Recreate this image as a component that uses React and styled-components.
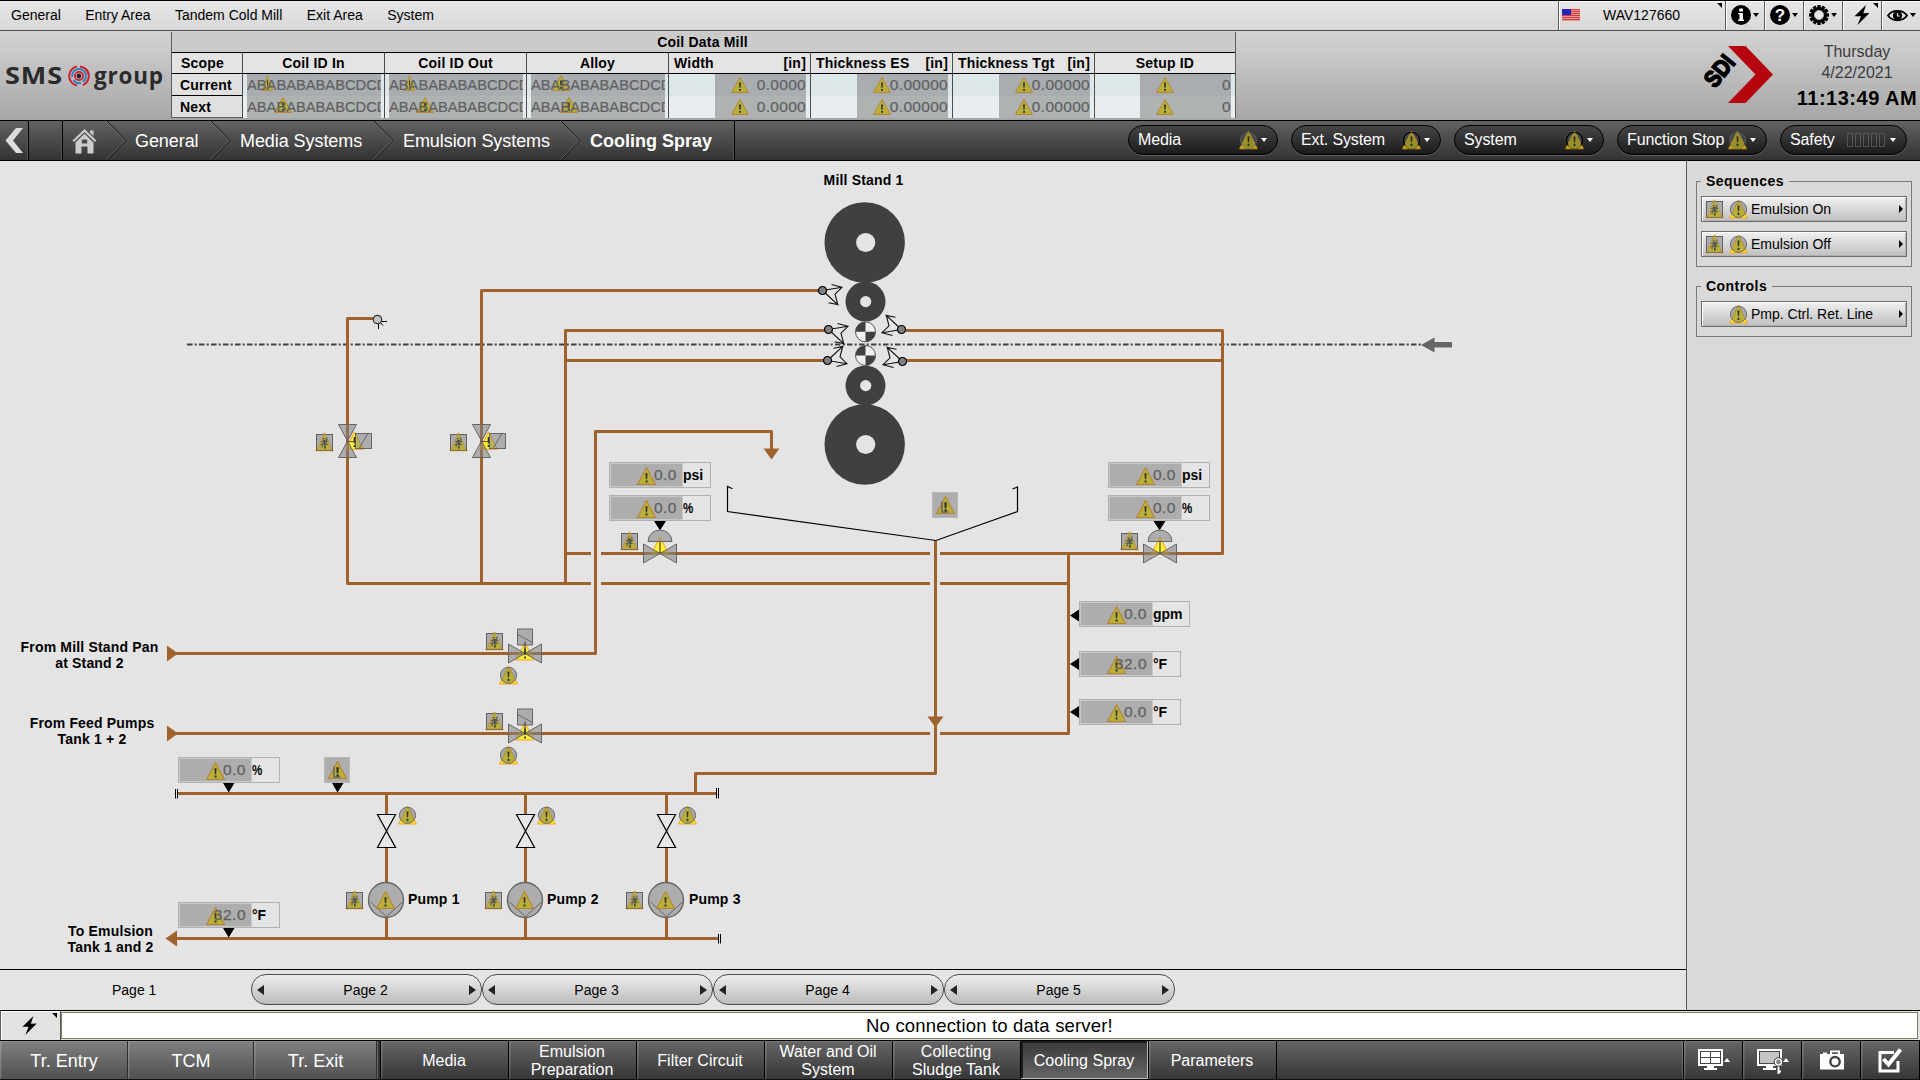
import React from 'react';
import styled, { createGlobalStyle, css } from 'styled-components';

const PIPE = '#a0622d';
const TOP = 161;

const GlobalStyle = createGlobalStyle`
  * { box-sizing: border-box; }
  html, body { margin: 0; padding: 0; overflow: hidden; background: #e4e4e4; }
  body { font-family: "Liberation Sans", Arial, Helvetica, sans-serif; font-size: 14px; color: #000; }
  svg { display: block; overflow: visible; flex: none; }
`;

const Screen = styled.div`
  width: 1920px;
  height: 1080px;
  display: flex;
  flex-direction: column;
  overflow: hidden;
  white-space: nowrap;
`;

/* ---------- menu bar ---------- */

const MenuBar = styled.div`
  flex: none;
  height: 31px;
  display: flex;
  border-top: 1px solid #000;
  border-bottom: 1px solid #4c4c4c;
  background: linear-gradient(#e6e6e6, #d8d8d8);
`;

const MenuItems = styled.div`
  flex: 1;
  display: flex;
  align-items: center;
  padding: 0 0 1px 11px;
  gap: 24.4px;
`;

const MenuButton = styled.div`
  position: relative;
  width: ${p => p.$w}px;
  display: flex;
  align-items: center;
  justify-content: ${p => (p.$start ? 'flex-start' : 'center')};
  padding: 0 0 1px ${p => (p.$start ? 3 : 0)}px;
  gap: 2px;
  border-left: 1px solid #5a5a5a;
  box-shadow: inset 1px 1px 0 #fff;
`;

const Station = styled.span`
  margin-left: 21px;
`;

const Corner = styled.i`
  position: absolute;
  right: 3px;
  top: 2px;
  border-top: 5px solid #000;
  border-left: 5px solid transparent;
`;

const Caret = styled.i`
  border-left: ${p => p.$s || 3.5}px solid transparent;
  border-right: ${p => p.$s || 3.5}px solid transparent;
  border-top: 4px solid ${p => p.$c || '#000'};
`;

/* ---------- header ---------- */

const Header = styled.div`
  flex: none;
  height: 90px;
  display: flex;
  background: linear-gradient(#d4d4d4, #a6a6a6);
  border-bottom: 1px solid #000;
`;

const Brand = styled.div`
  width: 171px;
  display: flex;
  align-items: center;
  padding: 0 0 0 5px;
  font: bold 22.5px "Open Sans", "Liberation Sans", sans-serif;
  letter-spacing: 0.8px;
  color: #2b2b2b;
`;

const BrandWide = styled.span`
  width: 58px;
  transform: scaleX(1.2);
  transform-origin: 0 50%;
`;

const CoilTable = styled.div`
  width: 1065px;
  height: 86px;
  margin-top: 1px;
  border: 1px solid #5c5c5c;
  border-top: 0;
  font-weight: bold;
  letter-spacing: 0.2px;
`;

const CoilTitle = styled.div`
  height: 20px;
  padding-right: 2px;
  line-height: 21px;
  text-align: center;
  background: #cbcbcb;
`;

const CoilRow = styled.div`
  display: grid;
  grid-template-columns: 70px repeat(6, 142px) 141px;
  height: ${p => p.$h}px;
  border-top: 1px solid #000;
  background: ${p => p.$bg};
`;

const CoilCell = styled.div`
  min-width: 0;
  display: flex;
  align-items: center;
  justify-content: ${p => p.$j || 'center'};
  padding: ${p => p.$p || '0'};
  border-left: ${p => (p.$first ? 0 : 1)}px solid #4c4c4c;
  background: ${p => p.$bg || 'transparent'};
`;

const CoilField = styled.div`
  position: relative;
  width: ${p => (p.$wide ? 134 : 91)}px;
  align-self: stretch;
  overflow: hidden;
  background: ${p => (p.$alt ? '#aeb2b2' : '#a9adb0')};
  color: #606060;
  font-weight: normal;
  font-size: ${p => (p.$wide ? 14.7 : 15.5)}px;
  letter-spacing: ${p => (p.$wide ? 0 : 0.3)}px;
  -webkit-text-stroke: 0.2px #606060;
  line-height: 22px;
  text-align: ${p => (p.$wide ? 'left' : 'right')};
`;

const FieldAlert = styled.span`
  position: absolute;
  left: ${p => p.$x}px;
  top: ${p => p.$y}px;
`;

const OverAlert = styled.span`
  position: relative;
`;

const Spacer = styled.div`
  flex: 1;
`;

const CompanyLogo = styled.div`
  padding: 14px 21px 0 0;
`;

const Clock = styled.div`
  width: 126px;
  padding-top: 11px;
  text-align: center;
  font-size: 16px;
  line-height: 20.5px;
  color: #3c3c3c;
`;

const Time = styled.div`
  margin-top: 3px;
  font-size: 20px;
  line-height: 24px;
  font-weight: bold;
  letter-spacing: 0.5px;
  color: #000;
`;

/* ---------- breadcrumb ---------- */

const NavBar = styled.div`
  flex: none;
  height: 40px;
  display: flex;
  background: linear-gradient(#626262, #333);
  border-bottom: 1px solid #000;
  color: #fff;
`;

const NavCell = styled.div`
  width: ${p => p.$w}px;
  display: flex;
  align-items: center;
  justify-content: ${p => p.$j || 'center'};
  padding-left: ${p => p.$pl || 0}px;
  border-right: 1px solid #000;
  box-shadow: inset -1px 0 0 #555;
`;

const Crumb = styled.div`
  width: ${p => p.$w}px;
  display: flex;
  align-items: center;
  justify-content: space-between;
  padding: 1px 0 0 ${p => p.$pl}px;
  font-size: 18px;
  letter-spacing: -0.07px;
`;

const CurrentCrumb = styled.b`
  padding-top: 1px;
  font-size: 18px;
`;

const Pills = styled.div`
  display: flex;
  align-items: center;
  gap: 13px;
  padding-right: 13px;
`;

const Pill = styled.div`
  width: ${p => p.$w}px;
  height: 30px;
  margin-top: -1px;
  display: flex;
  align-items: center;
  justify-content: space-between;
  padding: 0 10px 0 9px;
  border: 1px solid #000;
  border-radius: 15px;
  background: linear-gradient(#454545, #1b1b1b);
  box-shadow: 0 1px 0 #5c5c5c;
  font-size: 16px;
  letter-spacing: -0.12px;
`;

const PillState = styled.span`
  display: flex;
  align-items: center;
  gap: ${p => (p.$bars ? 2 : 3)}px;
`;

const SafetyBar = styled.i`
  width: 6px;
  height: 14px;
  border: 1px solid #555;
`;

/* ---------- work area ---------- */

const Body = styled.div`
  flex: none;
  height: 849px;
  display: flex;
`;

const Work = styled.div`
  width: 1687px;
  display: flex;
  flex-direction: column;
  background: #e4e4e4;
  border-right: 1px solid #5c5c5c;
`;

const Canvas = styled.div`
  position: relative;
  flex: none;
  height: 808px;
`;

const Placed = styled.div`
  position: absolute;
  left: ${p => p.$x}px;
  top: ${p => p.$y - TOP}px;
`;

const Label = styled(Placed)`
  font-weight: bold;
  line-height: 16px;
  letter-spacing: 0.17px;
  text-align: center;
  ${p => p.$mid && css`transform: translateX(-50%);`}
`;

const Value = styled.div`
  width: ${p => p.$w || 102}px;
  height: 26px;
  display: flex;
  border: 1px solid #b2b2b2;
`;

const ValueField = styled.div`
  position: relative;
  width: 73px;
  padding-right: 5px;
  border: 1px solid #c8c8c8;
  background: #adadad;
  color: #606060;
  font-size: 15.5px;
  letter-spacing: 0.5px;
  -webkit-text-stroke: 0.25px #606060;
  line-height: 22px;
  text-align: right;
`;

const Unit = styled.b`
  line-height: 24px;
  transform: scaleX(${p => (p.$narrow ? 0.82 : 1)});
  transform-origin: 0 50%;
`;

const LevelBox = styled.div`
  width: 26px;
  height: 26px;
  display: flex;
  align-items: center;
  justify-content: center;
  border: 1px solid #b8b8b8;
  background: #adadad;
`;

const Pages = styled.div`
  flex: 1;
  display: flex;
  padding-top: 4px;
  border-top: 1px solid #000;
`;

const PageCurrent = styled.div`
  width: 251px;
  padding-left: 112px;
  line-height: 33px;
`;

const PageButton = styled.div`
  width: 231px;
  height: 31px;
  display: flex;
  align-items: center;
  justify-content: space-between;
  padding: 0 5px;
  border: 1px solid #4c4c4c;
  border-radius: 15px;
  background: linear-gradient(#ededed, #bcbcbc);
`;

const PageName = styled.span`
  margin-left: -2px;
`;

const Side = styled.i`
  border-top: ${p => p.$h}px solid transparent;
  border-bottom: ${p => p.$h}px solid transparent;
  border-${p => (p.$left ? 'right' : 'left')}: ${p => p.$w}px solid ${p => p.$c || '#222'};
`;

const SidePanel = styled.div`
  flex: 1;
  padding: 20px 8px 0 9px;
  background: #d9d9d9;
`;

const Group = styled.div`
  height: ${p => p.$h}px;
  margin-bottom: 19px;
  padding: 0 4px;
  display: flex;
  flex-direction: column;
  gap: 9px;
  border: 1px solid #7a7a7a;
`;

const GroupTitle = styled.div`
  align-self: flex-start;
  height: 16px;
  margin: -9px 0 -2px 0;
  padding: 0 5px;
  line-height: 16px;
  background: #d9d9d9;
  font-weight: bold;
  letter-spacing: 0.45px;
`;

const SeqButton = styled.div`
  flex: none;
  height: 26px;
  display: flex;
  align-items: center;
  padding: 0 3px;
  border: 1px solid #6c6c6c;
  background: linear-gradient(#f0f0f0, #c0c0c0);
  box-shadow: inset 1px 1px 0 #fff, inset -1px -1px 0 #b0b0b0;
`;

const IconSlot = styled.span`
  width: ${p => p.$w}px;
`;

/* ---------- message line ---------- */

const MessageRow = styled.div`
  flex: none;
  height: 30px;
  display: flex;
  border-top: 1px solid #000;
  background: #e2e2e2;
`;

const MessageButton = styled.div`
  position: relative;
  width: 61px;
  display: flex;
  align-items: center;
  justify-content: center;
  padding-right: 1px;
  border: 1px solid #5c5c5c;
  border-width: 0 1px;
  box-shadow: inset 1px 1px 0 #fff;
`;

const Message = styled.div`
  flex: 1;
  margin: 1px 2px 1px 0;
  border: 1px solid #7c7c66;
  background: #fff;
  text-align: center;
  font-size: 18.5px;
  letter-spacing: 0.18px;
  line-height: 26px;
`;

/* ---------- bottom bar ---------- */

const BottomBar = styled.div`
  flex: none;
  height: 40px;
  display: flex;
  border-top: 1px solid #000;
  border-bottom: 1px solid #111;
  background: linear-gradient(#666, #363636);
  color: #fff;
`;

const BottomButton = styled.div`
  width: ${p => p.$w}px;
  display: flex;
  align-items: center;
  justify-content: center;
  gap: 1px;
  padding-top: ${p => (p.$icon ? 0 : 2)}px;
  padding-left: ${p => (p.$area || p.$icon ? 1 : 0)}px;
  padding-right: ${p => (p.$area || p.$icon ? 0 : 1)}px;
  text-align: center;
  white-space: pre;
  font-size: ${p => (p.$area ? 18 : 16)}px;
  line-height: 18px;
  border-right: 1px solid ${p => (p.$area ? '#2e2e2e' : '#000')};
  background: ${p => (p.$area ? 'linear-gradient(#808080, #505050)' : p.$on ? 'linear-gradient(#3a3a3a, #666)' : 'transparent')};
  box-shadow: ${p => (p.$on ? 'inset -1px -1px 0 #bbb, inset 2px 2px 0 #1c1c1c' : 'inset 1px 1px 0 rgba(255,255,255,.12), inset 2px 0 0 rgba(255,255,255,.08)')};
`;

const BottomGap = styled.div`
  width: 4px;
  border-left: 1px solid #666;
  border-right: 1px solid #000;
  background: #333;
`;

const UpCaret = styled.i`
  border-left: 3px solid transparent;
  border-right: 3px solid transparent;
  border-bottom: 4px solid #fff;
`;

/* ---------- symbols ---------- */

const Tri = ({ w = 18, h = 18 }) => (
  <svg width={w} height={h} viewBox="0 0 18 18" preserveAspectRatio="none">
    <path d="M9 .6 17.5 17.4H.5Z" fill="#b9b03a" stroke="#b98233" />
    <path d="M8 6.2h2l-.4 6h-1.2Z M8.1 13.4h1.9v2.2h-1.9Z" fill="#333" />
  </svg>
);

const HashIcon = () => (
  <svg width="19" height="20" viewBox="0 0 19 20">
    <path d="M9.5 .8 18.3 18.8H.7Z" fill="#ffe93a" stroke="#f0a030" />
    <rect x="1.5" y="2.5" width="16" height="16" fill="#acacac" stroke="#606060" />
    <path d="M9.5 1 17 18H2Z" fill="#b9b03a" stroke="#b9903a" strokeWidth=".8" />
    <path d="M9 8h1.6l-.2 5h-1.2Z M9 14.4h1.6v2.2h-1.6Z" fill="#333" />
    <text x="9" y="15" fontSize="13" fontStyle="italic" stroke="#606060" strokeWidth=".5" fill="#606060" textAnchor="middle">#</text>
  </svg>
);

const RoundIcon = () => (
  <svg width="19" height="20" viewBox="0 0 19 20">
    <clipPath id="roundClip"><circle cx="9.5" cy="10.3" r="8" /></clipPath>
    <path d="M9.5 1 18.4 19H.6Z" fill="#ffe81a" stroke="#f0a030" />
    <circle cx="9.5" cy="10.3" r="8.1" fill="#a8a8a8" />
    <path d="M9.5 1 18.4 19H.6Z" clipPath="url(#roundClip)" fill="#b9b03a" stroke="#b9822c" strokeWidth=".8" />
    <circle cx="9.5" cy="10.3" r="8.1" fill="none" stroke="#6a6a6a" />
    <path d="M8.5 6.5h2l-.4 5.8h-1.2Z M8.6 13.8h1.8v2.1h-1.8Z" fill="#333" />
  </svg>
);

/* the ring is black on systems, grey on media and function stop */
const PillIcon = ({ ring }) => (
  <svg width="19" height="20" viewBox="0 0 19 20">
    <path d="M9.5 1 18.4 18.8H.6Z" fill="#d9ae08" stroke="#c08a20" />
    <circle cx="9.5" cy="10.3" r="8" fill="#777" fillOpacity=".3" stroke={ring} strokeWidth="1.2" />
    <path d="M9.5 1.8 16 15.5A8 8 0 0 1 3 15.5Z" fill="#96902a" />
    <path d="M8.5 6.5h2l-.4 5.8h-1.2Z M8.6 13.8h1.8v2.1h-1.8Z" fill="#2c2c10" />
  </svg>
);

const Bolt = ({ s = 20 }) => (
  <svg width={s * 0.8} height={s} viewBox="0 0 16 20">
    <path d="M12 0 0.5 11.2 7 11.2 3.5 20 15.5 8 9.3 8.2Z" fill="#000" />
  </svg>
);

const Flag = () => (
  <svg width="18" height="12" viewBox="0 0 18 12" shapeRendering="crispEdges">
    <rect width="18" height="12" fill="#e99a9a" />
    {[0, 2, 4, 6, 8, 10].map(y => <rect key={y} y={y} width="18" height="1" fill="#d03a3a" />)}
    <rect width="9" height="6" fill="#2424b8" />
  </svg>
);

const Disc = ({ children }) => (
  <svg width="20" height="20" viewBox="0 0 20 20">
    <circle cx="10" cy="10" r="10" fill="#000" />
    {children}
  </svg>
);

const Gear = () => (
  <svg width="20" height="20" viewBox="-10 -10 20 20">
    {[0, 30, 60, 90, 120, 150].map(a => <rect key={a} x="-1.7" y="-10" width="3.4" height="20" transform={`rotate(${a})`} />)}
    <circle r="7.8" />
    <circle r="4.6" fill="#e8e8e8" stroke="#aaa" />
  </svg>
);

const Eye = () => (
  <svg width="21" height="13" viewBox="0 0 21 13">
    <path d="M1 6.5C5 .2 16 .2 20 6.5 16 12.8 5 12.8 1 6.5Z" fill="none" stroke="#000" strokeWidth="1.8" />
    <circle cx="10.5" cy="6.5" r="4.6" />
    <path d="M10.5 4v3h2.2" stroke="#e0e0e0" fill="none" strokeWidth="1.2" />
  </svg>
);

const TargetSvg = styled.svg`
  margin: 0 4px 0 5px;
`;

const Target = () => (
  <TargetSvg width="22" height="22" viewBox="-11 -11 22 22">
    <g fill="none" strokeWidth="2">
      <path d="M-2 -9.6A9.8 9.8 0 0 0 -2 9.6M4 9A9.8 9.8 0 0 0 7 -6.8" stroke="#cc1f2f" />
      <path d="M1 -9.6A9.6 9.6 0 0 1 9.2 -2" stroke="#cc1f2f" />
      <path d="M-6.8 1A6.9 6.9 0 1 1 4 5.6" stroke="#2a7fc0" />
      <path d="M-5.5 4A6.9 6.9 0 0 0 2 6.8" stroke="#2a7fc0" />
      <circle r="4.1" stroke="#cc1f2f" strokeWidth="1.8" />
    </g>
    <circle r="2.4" fill="#222" />
  </TargetSvg>
);

const SdiLogo = () => (
  <svg width="70" height="58" viewBox="1703 45 70 58">
    <path d="M1728 46H1745.5L1773 74.5 1745.5 103H1728L1755.5 74.5Z" fill="#b5050f" />
    <text
      transform="translate(1715 89) rotate(-51) scale(.86 1)"
      fontFamily="Liberation Sans, Arial, sans-serif" fontSize="23.5" fontWeight="bold" stroke="#000" strokeWidth="1.6"
    >SDI</text>
  </svg>
);

const Home = () => (
  <svg width="25" height="25" viewBox="0 0 25 25">
    <path d="M12.5 0 24.5 11.5 23 13 12.5 3 2 13 .5 11.5Z M18 1.5h3.5V7L18 3.8Z" fill="#ccc" />
    <path d="M12.5 4.8 21.5 13.4V24.5H15.5V17.5H9.5V24.5H3.5V13.4Z M9.8 10.5h5.4v4H9.8Z" fill="#ccc" fillRule="evenodd" />
  </svg>
);

const ChevronSvg = styled.svg`
  margin-top: -1px;
`;

const Chevron = () => (
  <ChevronSvg width="20" height="39" viewBox="0 0 20 39">
    <path d="M0 0 19 19.5 0 39" fill="none" stroke="#111" />
    <path d="M-1 0 18 19.5 -1 39" fill="none" stroke="#777" strokeWidth=".7" />
  </ChevronSvg>
);

const Back = () => (
  <svg width="19" height="25" viewBox="0 0 19 25">
    <path d="M11 0H18L8 12.5 18 25H11L.5 12.5Z" fill="#ddd" />
  </svg>
);

/* valve bodies share the grey translucent fill of a disconnected device */
const DeviceShape = { fill: '#808080', fillOpacity: 0.55, stroke: '#666' };

const VerticalValve = ({ x }) => (
  <g transform={`translate(${x} 0)`}>
    <path d="M7 431.8 16 449.3H-2Z" fill="#fff02c" stroke="#f0a030" />
    <path d="M-1.5 449.3 1.5 443.4V449.3Z" fill="#a0701c" />
    <path d="M-9 424.5H9L0 441Z M-9 457.5H9L0 441Z" {...DeviceShape} />
    <rect x="8" y="433.5" width="16" height="15" {...DeviceShape} />
    <path d="M12 448 20 434" stroke="#666" fill="none" />
    <path d="M0 441.5H8" stroke="#555" />
    <path d="M6.2 437h1.6v6.5h-1.6Z M6.2 445h1.6v2h-1.6Z" fill="#333" />
  </g>
);

const FlowValve = ({ x, y, dome }) => (
  <g transform={`translate(${x} ${y})`}>
    <path d="M0 -17.5 9 0H-9Z" fill="#fff02c" stroke="#f0a030" transform={dome ? 'translate(0 1)' : 'translate(0 6.5)'} />
    <path d={dome ? 'M-8.5 -1.5H8.5L9.3 1H-9.3Z' : 'M-6 -1.5H6L7.3 1.5H-7.3Z'} fill="#b08a20" />
    <path d="M-16.5 -9.5V9.5L0 0Z M16.5 -9.5V9.5L0 0Z" {...DeviceShape} />
    {dome
      ? <path d="M-12 -12A12 11.5 0 0 1 12 -12Z" {...DeviceShape} />
      : <path d="M-7.5 -24.5H7.5V-8.5H-7.5Z M-7.5 -19 7.5 -11" {...DeviceShape} />}
    <path d="M0 -12V0" stroke="#555" strokeWidth="1.3" />
    {!dome && <path d="M-1 -5H1V1H-1Z M-1 3H1V5H-1Z" fill="#444" />}
  </g>
);

const Roll = ({ x = 865.5, y, r, hole }) => (
  <g>
    <circle cx={x} cy={y} r={r} fill="#404040" />
    <circle cx="865.7" cy={y} r={hole} fill="#e4e4e4" />
  </g>
);

const WorkRoll = ({ y }) => (
  <g transform={`translate(865.5 ${y})`}>
    <circle r="10" fill="#f0f0f0" stroke="#555" />
    <path d="M0 0V-10A10 10 0 0 0 -10 0Z M0 0V10A10 10 0 0 0 10 0Z" fill="#404040" />
  </g>
);

const Nozzle = ({ x, y, sx = 1, sy = 1 }) => (
  <g transform={`translate(${x} ${y}) scale(${sx} ${sy})`}>
    <path
      d="M0 0 19.5 -3.2M9 -6 19.5 -3.2 12.5 3.7 15.2 14M0 0 15.2 14 6 12.3"
      fill="none" stroke="#111" strokeWidth="1.1"
    />
    <circle r="4" fill="#808080" stroke="#000" strokeWidth="1.2" />
  </g>
);

const Pump = ({ x }) => (
  <g>
    <path d={`M${x} 793.5V814M${x} 847V882M${x} 918V938`} stroke={PIPE} strokeWidth="3" />
    <path d={`M${x - 9} 814.5H${x + 9}L${x - 9} 847.5H${x + 9}Z`} fill="#e8e8e8" stroke="#000" strokeWidth="1.2" />
    <circle cx={x - 0.5} cy="900" r="17.5" fill="#adadad" stroke="#666" strokeWidth="1.4" />
    <path d={`M${x - 16} 902 ${x} 916.5 ${x + 16} 902`} stroke="#666" fill="none" />
  </g>
);

const Pipework = () => (
  <svg width="1686" height="808" viewBox={`0 ${TOP} 1686 808`}>
    <path d="M187 344.5H1421" stroke="#404040" strokeWidth="2" strokeDasharray="5.5 2.2 2 2.3" />
    <path d="M1421 345 1434.5 337.5V342H1452V347.5H1434.5V352.5Z" fill="#666" />
    <path
      fill="none" stroke={PIPE} strokeWidth="3" strokeLinejoin="round"
      d="M373 318.5H347.5V583.5H591M481.5 583.5V290.5H820M565.5 583.5V330.5H824M565.5 360.5H824
         M906 330.5H1222.5V553.5H940M906 360.5H1222.5M565.5 553.5H591M601 553.5H930M601 583.5H930M940 583.5H1068.5
         M171 653.5H595.5V431.5H771.5V450M171 733.5H930M940 733.5H1068.5V553.5
         M935.5 541V773.5H695.5V793.5M177 793.5H717M172 938.5H719"
    />
    <path d="M167 645.5V661.5L178 653.5Z M167 725.5V741.5L178 733.5Z M177 930.5V946.5L165.5 938.5Z M763.5 448.5H779.5L771.5 459.5Z M927.5 716.5H943.5L935.5 727.5Z" fill={PIPE} />
    <path d="M175.5 789V798.5M177.5 789V798.5M716.5 788V798.5M718.5 788V798.5M718.5 934V943.5M720.5 934V943.5" stroke="#000" />
    <path d="M732.5 488.7 727.5 486.5V511.5L936 540.5 1017.5 511.5V487L1012.5 489" fill="none" stroke="#000" strokeWidth="1.2" />
    <path
      d="M654 521H666L660 530.5Z M1153.5 521H1165.5L1159.5 530.5Z M1079 609.5V621.5L1070 615.5Z M1079 658V670L1070 664Z
         M1079 706V718L1070 712Z M223 783H234.5L228.7 792.5Z M332 783H343.5L337.5 792.5Z M223 928H234.5L228.7 937.5Z"
    />
    <Roll x={864.7} y={242.5} r={40.2} hole={9.6} />
    <Roll y={301.6} r={20} hole={5.6} />
    <WorkRoll y={331.8} />
    <WorkRoll y={355.5} />
    <Roll y={385.6} r={20} hole={5.6} />
    <Roll x={864.7} y={444.5} r={40.2} hole={9.6} />
    <Nozzle x={822.5} y={290.5} />
    <Nozzle x={828.5} y={329.5} />
    <Nozzle x={827.5} y={360.5} sy={-1} />
    <Nozzle x={902.5} y={361.5} sx={-1} sy={-1} />
    <Nozzle x={901.5} y={329.5} sx={-1} sy={-1} />
    <path d="M378.5 323V329M381 321.5H387M380 322 383 325.5" stroke="#000" />
    <circle cx="377.5" cy="319.5" r="4.2" fill="#c4c4c4" stroke="#333" strokeWidth="1.2" />
    <VerticalValve x={347.5} />
    <VerticalValve x={481.5} />
    <FlowValve x={525} y={653.5} />
    <FlowValve x={525} y={733.5} />
    <FlowValve x={660} y={553.5} dome />
    <FlowValve x={1160} y={553.5} dome />
    <Pump x={386.5} />
    <Pump x={525.5} />
    <Pump x={666.5} />
  </svg>
);

const LevelIcon = () => (
  <svg width="19" height="18" viewBox="0 0 19 18">
    <Tri w={19} />
    <path d="M6 5.5V16H12.5" fill="none" stroke="#666" strokeWidth="1.6" />
    <path d="M9.6 6.5V12M9.6 13.4V15.4" stroke="#333" strokeWidth="1.8" />
  </svg>
);

const ScreenIcon = ({ lock }) => (
  <svg width="25" height="26" viewBox="0 0 25 26" shapeRendering={lock ? undefined : 'crispEdges'}>
    <path d="M0 2H25V19H16V21H19V23H6V21H9V19H0Z" fill="#fff" />
    {lock
      ? <rect x="2.5" y="4.5" width="20" height="12" fill="#c4c4c4" stroke="#444" />
      : <path d="M2.5 4.5H22.5V16.5H2.5ZM12.5 4V17M2 10.5H23" fill="none" stroke="#444" />}
    {lock && (
      <g fill="none" stroke="#333">
        <path d="M21.5 19V27M21.5 24.5H24" stroke="#fff" strokeWidth="2" />
        <circle cx="21.5" cy="15" r="3.2" fill="#888" stroke="#fff" strokeWidth="1.6" />
        <circle cx="21.5" cy="15" r="4.3" />
      </g>
    )}
  </svg>
);

const Camera = () => (
  <svg width="24" height="20" viewBox="0 0 24 20">
    <path d="M0 4H3V2.5H7V4H10V.5H20V4H24V19.5H0Z M12 2.3V4H18V2.3Z" fill="#fff" fillRule="evenodd" />
    <circle cx="15" cy="11.7" r="4.7" fill="#fff" stroke="#444" strokeWidth="2.4" />
  </svg>
);

const CheckBox = () => (
  <svg width="25" height="25" viewBox="0 0 25 25">
    <path d="M16 4.5H2V23H20V13" fill="none" stroke="#fff" strokeWidth="3" />
    <path d="M5.5 11 10.5 16.5 22.5 1.5" fill="none" stroke="#fff" strokeWidth="4" />
  </svg>
);

/* ---------- data ---------- */

const coilColumns = [
  { name: 'Coil ID In', wide: true, marks: [[15, 11], [27, 18]] },
  { name: 'Coil ID Out', wide: true, marks: [[15, 11], [27, 18]] },
  { name: 'Alloy', wide: true, marks: [[21, 18], [29, 18]] },
  { name: 'Width', unit: '[in]', value: '0.0000' },
  { name: 'Thickness ES', unit: '[in]', value: '0.00000' },
  { name: 'Thickness Tgt', unit: '[in]', value: '0.00000' },
  { name: 'Setup ID', value: '0' },
];

const values = [
  { x: 609, y: 462, v: '0.0', u: 'psi' },
  { x: 609, y: 495, v: '0.0', u: '%' },
  { x: 1108, y: 462, v: '0.0', u: 'psi' },
  { x: 1108, y: 495, v: '0.0', u: '%' },
  { x: 1079, y: 601, v: '0.0', u: 'gpm', w: 111 },
  { x: 1079, y: 651, v: '32.0', u: '°F' },
  { x: 1079, y: 699, v: '0.0', u: '°F' },
  { x: 178, y: 757, v: '0.0', u: '%' },
  { x: 178, y: 902, v: '32.0', u: '°F' },
];

const hashes = [[315, 432], [449, 432], [485, 631], [485, 711], [620, 531], [1120, 531], [345, 890], [484, 890], [625, 890]];
const rounds = [[499, 665], [499, 745], [398, 805], [537, 805], [678, 805]];
const pumps = [[386, 408, 'Pump 1'], [525, 547, 'Pump 2'], [666, 689, 'Pump 3']];
const statusPills = [['Media', '#555'], ['Ext. System', '#000'], ['System', '#000'], ['Function Stop', '#555']];
const areas = [['Tr. Entry', 128], ['TCM', 126], ['Tr. Exit', 123]];
const screens = ['Media', 'Emulsion\nPreparation', 'Filter Circuit', 'Water and Oil\nSystem', 'Collecting\nSludge Tank', 'Cooling Spray', 'Parameters'];

export default function App() {
  return (
    <Screen>
      <GlobalStyle />
      <MenuBar>
        <MenuItems>
          {['General', 'Entry Area', 'Tandem Cold Mill', 'Exit Area', 'System'].map(t => <span key={t}>{t}</span>)}
        </MenuItems>
        <MenuButton $w={167} $start><Flag /><Station>WAV127660</Station><Corner /></MenuButton>
        <MenuButton $w={39}>
          <Disc><path d="M8.3 3.5h3.6v3H8.3ZM7.3 8h4.6v6.5h1.2V16H7.2v-1.5h1.3v-5H7.3Z" fill="#fff" /></Disc><Caret />
        </MenuButton>
        <MenuButton $w={39}>
          <Disc><text x="10" y="16" fontSize="17" fontWeight="bold" fill="#fff" textAnchor="middle">?</text></Disc><Caret />
        </MenuButton>
        <MenuButton $w={39}><Gear /><Caret /></MenuButton>
        <MenuButton $w={39}><Bolt /><Corner /></MenuButton>
        <MenuButton $w={39}><Eye /><Caret /></MenuButton>
      </MenuBar>

      <Header>
        <Brand><BrandWide>SMS</BrandWide><Target />group</Brand>
        <CoilTable>
          <CoilTitle>Coil Data Mill</CoilTitle>
          <CoilRow $h={21} $bg="#e4e4e4">
            <CoilCell $first $j="flex-start" $p="0 0 0 9px">Scope</CoilCell>
            {coilColumns.map(c => (
              <CoilCell key={c.name} $j={c.unit ? 'space-between' : 'center'} $p={c.unit ? '0 4px 0 5px' : '0'}>
                <span>{c.name}</span>{c.unit && <span>{c.unit}</span>}
              </CoilCell>
            ))}
          </CoilRow>
          {['Current', 'Next'].map((row, i) => (
            <CoilRow key={row} $h={22} $bg="#e0e0e0">
              <CoilCell $first $j="flex-start" $p="0 0 0 8px">{row}</CoilCell>
              {coilColumns.map(c => (
                <CoilCell key={c.name} $j="flex-end" $p={c.wide ? '0 3px 0 0' : '0 4px 0 0'} $bg={i ? '#e8eef0' : '#dde6e9'}>
                  <CoilField $wide={c.wide} $alt={i === 1}>
                    <FieldAlert $x={c.wide ? c.marks[i][0] : 16} $y={c.wide ? 1 : 3}>
                      <Tri w={c.wide ? c.marks[i][1] : 18} h={16} />
                    </FieldAlert>
                    <OverAlert>{c.wide ? 'ABABABABABCDCD' : c.value}</OverAlert>
                  </CoilField>
                </CoilCell>
              ))}
            </CoilRow>
          ))}
        </CoilTable>
        <Spacer />
        <CompanyLogo><SdiLogo /></CompanyLogo>
        <Clock>
          <div>Thursday</div>
          <div>4/22/2021</div>
          <Time>11:13:49 AM</Time>
        </Clock>
      </Header>

      <NavBar>
        <NavCell $w={29}><Back /></NavCell>
        <NavCell $w={34} />
        <Crumb $w={64} $pl={9}><Home /><Chevron /></Crumb>
        <Crumb $w={104} $pl={8}>General<Chevron /></Crumb>
        <Crumb $w={163} $pl={9}>Media Systems<Chevron /></Crumb>
        <Crumb $w={187} $pl={9}>Emulsion Systems<Chevron /></Crumb>
        <NavCell $w={154} $j="flex-start" $pl={9}><CurrentCrumb>Cooling Spray</CurrentCrumb></NavCell>
        <Spacer />
        <Pills>
          {statusPills.map(([t, ring]) => (
            <Pill key={t} $w={150}>{t}<PillState><PillIcon ring={ring} /><Caret $c="#fff" /></PillState></Pill>
          ))}
          <Pill $w={127}>
            Safety
            <PillState $bars>
              {[0, 1, 2, 3, 4].map(n => <SafetyBar key={n} />)}
              <IconSlot $w={1} /><Caret $c="#fff" />
            </PillState>
          </Pill>
        </Pills>
      </NavBar>

      <Body>
        <Work>
          <Canvas>
            <Pipework />
            <Label $mid $x={863.5} $y={172}>Mill Stand 1</Label>
            <Label $mid $x={89.5} $y={639}>From Mill Stand Pan<br />at Stand 2</Label>
            <Label $mid $x={92} $y={715}>From Feed Pumps<br />Tank 1 + 2</Label>
            <Label $mid $x={110.5} $y={923}>To Emulsion<br />Tank 1 and 2</Label>
            {values.map(b => (
              <Placed key={`${b.x}-${b.y}`} $x={b.x} $y={b.y}>
                <Value $w={b.w}>
                  <ValueField>
                    <FieldAlert $x={26} $y={3}><Tri w={19} h={18} /></FieldAlert>
                    <OverAlert>{b.v}</OverAlert>
                  </ValueField>
                  <Unit $narrow={b.u === '%'}>{b.u}</Unit>
                </Value>
              </Placed>
            ))}
            {[[932, 492], [324, 757]].map(([x, y]) => (
              <Placed key={x} $x={x} $y={y}><LevelBox><LevelIcon /></LevelBox></Placed>
            ))}
            {hashes.map(([x, y]) => <Placed key={`${x}-${y}`} $x={x} $y={y}><HashIcon /></Placed>)}
            {rounds.map(([x, y]) => <Placed key={`${x}-${y}`} $x={x} $y={y}><RoundIcon /></Placed>)}
            {pumps.map(([x, lx, name]) => (
              <React.Fragment key={name}>
                <Placed $x={x - 10} $y={891}><Tri w={19} /></Placed>
                <Label $x={lx} $y={891}>{name}</Label>
              </React.Fragment>
            ))}
          </Canvas>
          <Pages>
            <PageCurrent>Page 1</PageCurrent>
            {[2, 3, 4, 5].map(n => (
              <PageButton key={n}><Side $left $h={5.5} $w={7} /><PageName>Page {n}</PageName><Side $h={5.5} $w={7} /></PageButton>
            ))}
          </Pages>
        </Work>
        <SidePanel>
          <Group $h={86}>
            <GroupTitle>Sequences</GroupTitle>
            {['Emulsion On', 'Emulsion Off'].map(t => (
              <SeqButton key={t}>
                <IconSlot $w={24}><HashIcon /></IconSlot><IconSlot $w={22}><RoundIcon /></IconSlot>{t}
                <Spacer /><Side $h={4} $w={4} $c="#000" />
              </SeqButton>
            ))}
          </Group>
          <Group $h={51}>
            <GroupTitle>Controls</GroupTitle>
            <SeqButton>
              <IconSlot $w={24} /><IconSlot $w={22}><RoundIcon /></IconSlot>Pmp. Ctrl. Ret. Line
              <Spacer /><Side $h={4} $w={4} $c="#000" />
            </SeqButton>
          </Group>
        </SidePanel>
      </Body>

      <MessageRow>
        <MessageButton><Bolt s={19} /><Corner /></MessageButton>
        <Message>No connection to data server!</Message>
      </MessageRow>

      <BottomBar>
        {areas.map(([t, w]) => <BottomButton key={t} $area $w={w}>{t}</BottomButton>)}
        <BottomGap />
        {screens.map(t => <BottomButton key={t} $w={128} $on={t === 'Cooling Spray'}>{t}</BottomButton>)}
        <Spacer />
        <BottomButton $w={1} $icon />
        <BottomButton $w={59} $icon><ScreenIcon /><UpCaret /></BottomButton>
        <BottomButton $w={59} $icon><ScreenIcon lock /><UpCaret /></BottomButton>
        <BottomButton $w={59} $icon><Camera /></BottomButton>
        <BottomButton $w={59} $icon><CheckBox /></BottomButton>
      </BottomBar>
    </Screen>
  );
}
